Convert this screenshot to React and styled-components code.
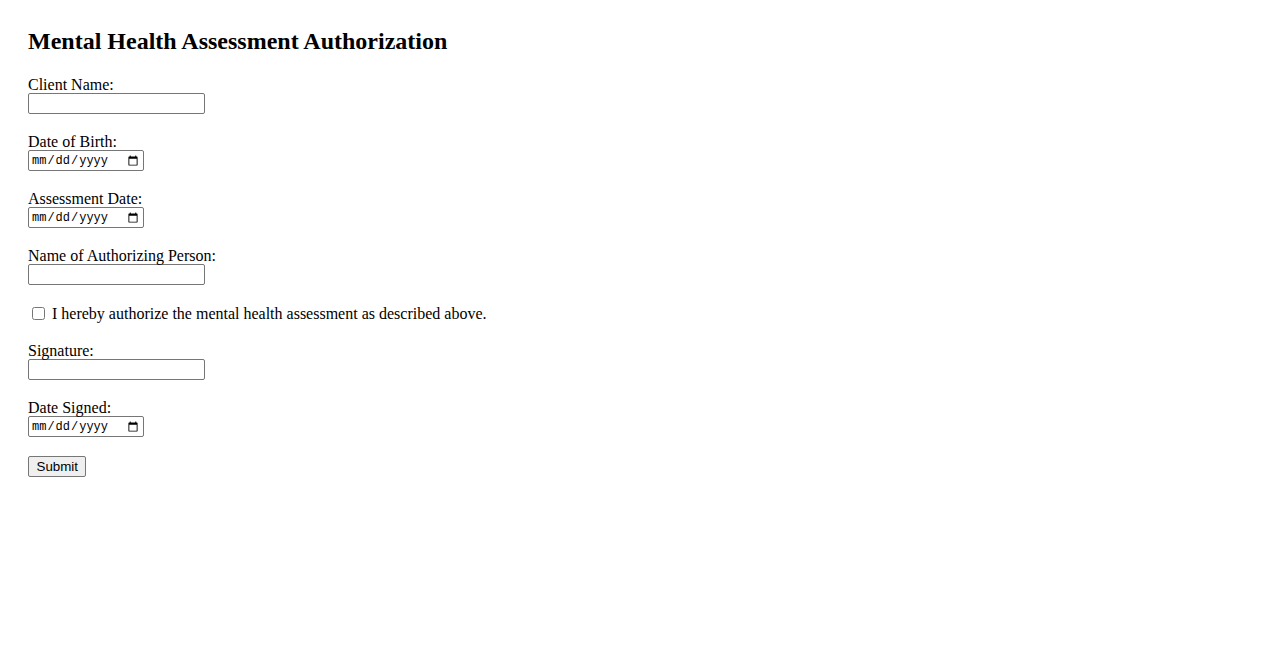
import React from "react";
import styled, { createGlobalStyle } from "styled-components";

const Global = createGlobalStyle`
  body {
    margin: 0;
    padding: 28px;
    font-family: "Liberation Serif", "Times New Roman", serif;
    font-size: 16px;
    color: #000;
    background: #fff;
  }
`;

const Title = styled.h2`
  margin: 0 0 22px;
  font-size: 24px;
  font-weight: bold;
  line-height: 26px;
`;

const Field = styled.div`
  margin-bottom: 19px;
`;

const Label = styled.label`
  display: block;
  line-height: 17px;
`;

const TextInput = styled.input`
  display: block;
  box-sizing: border-box;
  width: 177px;
  height: 21px;
  margin: 0;
  padding: 1px 2px;
  border: 1px solid #767676;
  border-radius: 2px;
  font-family: "Liberation Sans", Arial, sans-serif;
  font-size: 13.33px;
`;

const DateInput = styled(TextInput)`
  width: 116px;
  font-family: "Liberation Mono", "Courier New", monospace;
  font-size: 12px;
`;

const CheckRow = styled.div`
  display: flex;
  align-items: center;
  height: 19px;
  margin-bottom: 19px;
  line-height: 18px;
`;

const Checkbox = styled.input`
  width: 13px;
  height: 13px;
  margin: 3px 7px 3px 4px;
`;

const Button = styled.button`
  font-family: "Liberation Sans", Arial, sans-serif;
  font-size: 13.33px;
  height: 21px;
  padding: 1px 7.5px;
  border: 1px solid #767676;
  border-radius: 2px;
  background: #efefef;
  color: #000;
`;

export default function App() {
  return (
    <>
      <Global />
      <Title>Mental Health Assessment Authorization</Title>
      <form onSubmit={(e) => e.preventDefault()}>
        <Field>
          <Label htmlFor="client">Client Name:</Label>
          <TextInput id="client" type="text" />
        </Field>
        <Field>
          <Label htmlFor="dob">Date of Birth:</Label>
          <DateInput id="dob" type="date" />
        </Field>
        <Field>
          <Label htmlFor="adate">Assessment Date:</Label>
          <DateInput id="adate" type="date" />
        </Field>
        <Field>
          <Label htmlFor="auth">Name of Authorizing Person:</Label>
          <TextInput id="auth" type="text" />
        </Field>
        <CheckRow>
          <Checkbox id="consent" type="checkbox" />
          <label htmlFor="consent">I hereby authorize the mental health assessment as described above.</label>
        </CheckRow>
        <Field>
          <Label htmlFor="sig">Signature:</Label>
          <TextInput id="sig" type="text" />
        </Field>
        <Field>
          <Label htmlFor="dsigned">Date Signed:</Label>
          <DateInput id="dsigned" type="date" />
        </Field>
        <Button type="submit">Submit</Button>
      </form>
    </>
  );
}
